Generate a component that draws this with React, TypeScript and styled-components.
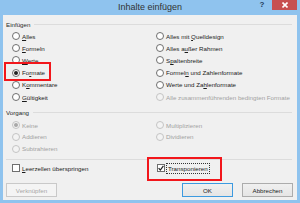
import React from "react";
import styled, { createGlobalStyle, css } from "styled-components";

const GlobalStyle = createGlobalStyle`
  html, body {
    margin: 0;
    padding: 0;
    background: #ffffff;
  }
  body {
    font-family: "Liberation Sans", Arial, sans-serif;
  }
`;

const Window = styled.div`
  width: 300px;
  height: 203px;
  box-sizing: border-box;
  background: #8fc3ee;
  display: flex;
  flex-direction: column;
  padding: 0 3px 3px 3px;
  overflow: hidden;
`;

const TitleBar = styled.div`
  height: 15px;
  display: grid;
  grid-template-columns: 1fr auto 1fr;
  align-items: start;
  margin: 0 -3px;
`;

const Title = styled.div`
  grid-column: 2;
  font-size: 9px;
  line-height: 14px;
  color: #333333;
`;

const TitleButtons = styled.div`
  grid-column: 3;
  justify-self: end;
  display: flex;
  align-items: flex-start;
  padding-right: 3px;
`;

const HelpButton = styled.div`
  width: 12px;
  font-size: 8px;
  font-weight: bold;
  line-height: 9px;
  color: #1f3a5a;
  text-align: center;
  margin-right: 4px;
`;

const CloseButton = styled.div`
  width: 25px;
  height: 10px;
  background: #c75050;
  display: flex;
  align-items: center;
  justify-content: center;
`;

const Body = styled.div`
  flex: 1;
  background: #f0f0f0;
  padding: 5px 5px 0 3px;
  display: flex;
  flex-direction: column;
  font-size: 6.2px;
  color: #1b1b1b;
`;

const GroupHeader = styled.div<{ $gap?: number }>`
  display: flex;
  align-items: center;
  height: 8px;
  margin-top: ${(p) => p.$gap ?? 0}px;
  color: #2a2a2a;
  &::after {
    content: "";
    flex: 1;
    height: 0;
    border-top: 1px solid #dcdcdc;
    margin-left: 4px;
  }
`;

const OptionGrid = styled.div<{ $row: number; $gap: number; $rows: number }>`
  display: grid;
  grid-template-columns: 144px 1fr;
  grid-template-rows: repeat(${(p) => p.$rows}, ${(p) => p.$row}px);
  grid-auto-flow: column;
  margin-top: ${(p) => p.$gap}px;
  margin-left: 6px;
`;

const Option = styled.label<{ $disabled?: boolean }>`
  position: relative;
  display: flex;
  align-items: center;
  gap: 2px;
  white-space: nowrap;
  color: ${(p) => (p.$disabled ? "#a2a2a2" : "#1b1b1b")};
`;

const RadioCircle = styled.span<{ $checked?: boolean; $disabled?: boolean }>`
  width: 8px;
  height: 8px;
  box-sizing: border-box;
  border-radius: 50%;
  border: 1px solid ${(p) => (p.$disabled ? "#c4c4c4" : "#6f6f6f")};
  background: ${(p) => (p.$disabled ? "#f3f3f3" : "#ffffff")};
  display: flex;
  align-items: center;
  justify-content: center;
  flex-shrink: 0;
  ${(p) =>
    p.$checked &&
    css`
      &::after {
        content: "";
        width: 4px;
        height: 4px;
        border-radius: 50%;
        background: ${p.$disabled ? "#a8a8a8" : "#222222"};
      }
    `}
`;

const CheckBox = styled.span`
  width: 8px;
  height: 8px;
  box-sizing: border-box;
  border: 1px solid #6f6f6f;
  background: #ffffff;
  flex-shrink: 0;
  display: flex;
  align-items: center;
  justify-content: center;
`;

const Key = styled.span`
  text-decoration: underline;
  text-underline-offset: 1px;
`;

const FocusLabel = styled.span`
  outline: 1px dotted #333;
  outline-offset: 0;
  padding: 0 1px;
  line-height: 9px;
`;

const Highlight = styled.span<{ $l: number; $t: number; $w: number; $h: number }>`
  position: absolute;
  left: ${(p) => p.$l}px;
  top: ${(p) => p.$t}px;
  width: ${(p) => p.$w}px;
  height: ${(p) => p.$h}px;
  box-sizing: border-box;
  border: 2px solid #f2161b;
  pointer-events: none;
`;

const Separator = styled.div`
  border-top: 1px solid #dcdcdc;
  margin-top: 4.5px;
`;

const CheckRow = styled.div`
  display: grid;
  grid-template-columns: 145px 1fr;
  height: 12px;
  margin-top: 2px;
  margin-left: 6px;
`;

const ButtonRow = styled.div`
  display: flex;
  align-items: center;
  margin-top: 9px;
  margin-right: -1px;
`;

const Button = styled.div<{ $default?: boolean; $disabled?: boolean }>`
  width: 51px;
  height: 14px;
  box-sizing: border-box;
  display: flex;
  align-items: center;
  justify-content: center;
  border: 1px solid ${(p) => (p.$default ? "#3c9ae0" : p.$disabled ? "#c9c9c9" : "#acacac")};
  background: ${(p) => (p.$disabled ? "#f4f4f4" : "linear-gradient(#f0f0f0, #e5e5e5)")};
  color: ${(p) => (p.$disabled ? "#a6a6a6" : "#1b1b1b")};
  & + & {
    margin-left: 9px;
  }
`;

const Spacer = styled.div`
  flex: 1;
`;

type Opt = {
  label: string;
  key?: number;
  checked?: boolean;
  disabled?: boolean;
  mark?: boolean;
};

const pasteOptions: Opt[] = [
  { label: "Alles", key: 0 },
  { label: "Formeln", key: 0 },
  { label: "Werte", key: 0 },
  { label: "Formate", key: 2, checked: true, mark: true },
  { label: "Kommentare", key: 1 },
  { label: "Gültigkeit", key: 0 },
  { label: "Alles mit Quelldesign", key: 10 },
  { label: "Alles außer Rahmen", key: 7 },
  { label: "Spaltenbreite", key: 1 },
  { label: "Formeln und Zahlenformate", key: 6 },
  { label: "Werte und Zahlenformate", key: 12 },
  { label: "Alle zusammenführenden bedingten Formate", disabled: true },
];

const operationOptions: Opt[] = [
  { label: "Keine", checked: true, disabled: true },
  { label: "Addieren", disabled: true },
  { label: "Subtrahieren", disabled: true },
  { label: "Multiplizieren", disabled: true },
  { label: "Dividieren", disabled: true },
  { label: "", disabled: true },
];

function Label({ text, k }: { text: string; k?: number }) {
  if (k === undefined) return <span>{text}</span>;
  return (
    <span>
      {text.slice(0, k)}
      <Key>{text[k]}</Key>
      {text.slice(k + 1)}
    </span>
  );
}

function Radio({ opt }: { opt: Opt }) {
  if (!opt.label) return <span />;
  return (
    <Option $disabled={opt.disabled}>
      <RadioCircle $checked={opt.checked} $disabled={opt.disabled} />
      <Label text={opt.label} k={opt.key} />
      {opt.mark && <Highlight $l={-8} $t={-5} $w={47} $h={19} />}
    </Option>
  );
}

export default function App() {
  return (
    <>
      <GlobalStyle />
      <Window>
        <TitleBar>
          <Title>Inhalte einfügen</Title>
          <TitleButtons>
            <HelpButton>?</HelpButton>
            <CloseButton>
              <svg width="6" height="6" viewBox="0 0 6 6">
                <path d="M0.5 0.5 L5.5 5.5 M5.5 0.5 L0.5 5.5" stroke="#fff" strokeWidth="1.6" />
              </svg>
            </CloseButton>
          </TitleButtons>
        </TitleBar>
        <Body>
          <GroupHeader>Einfügen</GroupHeader>
          <OptionGrid $row={12.2} $gap={2} $rows={6}>
            {pasteOptions.map((o) => (
              <Radio key={o.label} opt={o} />
            ))}
          </OptionGrid>

          <GroupHeader $gap={5}>Vorgang</GroupHeader>
          <OptionGrid $row={11.8} $gap={3} $rows={3}>
            {operationOptions.map((o, i) => (
              <Radio key={i} opt={o} />
            ))}
          </OptionGrid>

          <Separator />

          <CheckRow>
            <Option>
              <CheckBox />
              <Label text="Leerzellen überspringen" k={0} />
            </Option>
            <Option>
              <CheckBox>
                <svg width="6" height="6" viewBox="0 0 6 6">
                  <path d="M0.6 3.2 L2.3 5 L5.4 0.8" stroke="#222" strokeWidth="1.2" fill="none" />
                </svg>
              </CheckBox>
              <FocusLabel>Transponieren</FocusLabel>
              <Highlight $l={-10} $t={-5} $w={75} $h={24} />
            </Option>
          </CheckRow>

          <ButtonRow>
            <Button $disabled>Verknüpfen</Button>
            <Spacer />
            <Button $default>OK</Button>
            <Button>Abbrechen</Button>
          </ButtonRow>
        </Body>
      </Window>
    </>
  );
}
